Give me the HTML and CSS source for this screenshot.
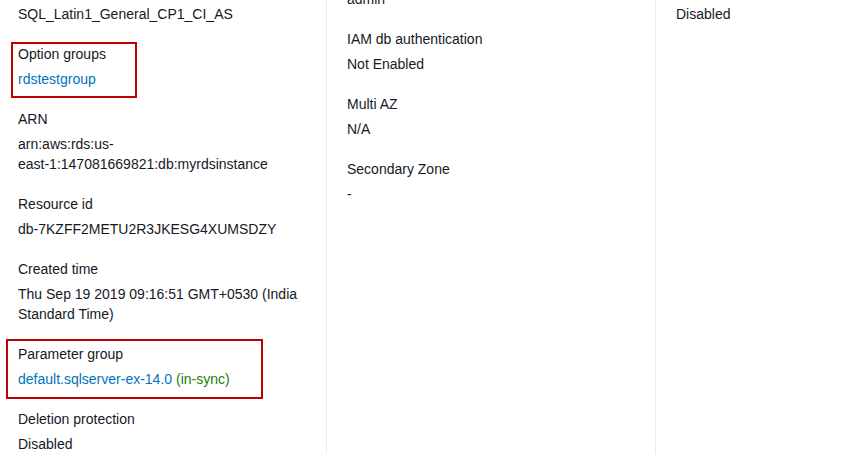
FILE: index.html
```html
<!DOCTYPE html>
<html>
<head>
<meta charset="utf-8">
<link rel="stylesheet" href="styles.css">
</head>
<body>
<div class="page">
  <div class="grid">
    <div class="col col-first">
      <div class="item">
        <div class="value">SQL_Latin1_General_CP1_CI_AS</div>
      </div>
      <div class="item hl hl-option">
        <div class="label">Option groups</div>
        <div class="value"><a class="link">rdstestgroup</a></div>
      </div>
      <div class="item">
        <div class="label">ARN</div>
        <div class="value">arn:aws:rds:us-<span class="nowrap">east-1:147081669821:db:myrdsinstance</span></div>
      </div>
      <div class="item">
        <div class="label">Resource id</div>
        <div class="value">db-7KZFF2METU2R3JKESG4XUMSDZY</div>
      </div>
      <div class="item">
        <div class="label">Created time</div>
        <div class="value">Thu Sep 19 2019 09:16:51 GMT+0530 (India Standard Time)</div>
      </div>
      <div class="item hl hl-param">
        <div class="label">Parameter group</div>
        <div class="value"><a class="link">default.sqlserver-ex-14.0</a> <span class="ok">(in-sync)</span></div>
      </div>
      <div class="item">
        <div class="label">Deletion protection</div>
        <div class="value">Disabled</div>
      </div>
    </div>
    <div class="col col-mid">
      <div class="shift">
        <div class="item">
          <div class="value">admin</div>
        </div>
        <div class="item">
          <div class="label">IAM db authentication</div>
          <div class="value">Not Enabled</div>
        </div>
        <div class="item">
          <div class="label">Multi AZ</div>
          <div class="value">N/A</div>
        </div>
        <div class="item">
          <div class="label">Secondary Zone</div>
          <div class="value">-</div>
        </div>
      </div>
    </div>
    <div class="col col-last">
      <div class="item">
        <div class="value">Disabled</div>
      </div>
    </div>
  </div>
</div>
</body>
</html>
```
FILE: styles.css
```css
html, body {
  margin: 0;
  padding: 0;
  background: #ffffff;
}
body {
  font-family: "Liberation Sans", Arial, sans-serif;
  font-size: 14px;
  line-height: 20px;
  color: #16191f;
}
.page {
  width: 851px;
  height: 470px;
  overflow: hidden;
}
.grid {
  display: grid;
  grid-template-columns: 326px 329px 1fr;
}
.col {
  display: flex;
  flex-direction: column;
  gap: 20px;
  padding-top: 4px;
}
.col-first {
  padding-left: 18px;
  padding-right: 20px;
}
.col-mid,
.col-last {
  border-left: 1px solid #eaeded;
  padding-left: 20px;
  padding-right: 20px;
}
.col-mid {
  padding-top: 0;
}
.shift {
  display: flex;
  flex-direction: column;
  gap: 20px;
  margin-top: -11px;
}
.item {
  display: flex;
  flex-direction: column;
  gap: 5px;
  position: relative;
}
.nowrap {
  white-space: nowrap;
}
.link {
  color: #0073bb;
  text-decoration: none;
}
.ok {
  color: #1d8102;
}
.hl::after {
  content: "";
  position: absolute;
  border: 2px solid #c00000;
  box-sizing: border-box;
  pointer-events: none;
}
.hl-option::after {
  left: -7px;
  top: -2px;
  width: 126px;
  height: 56px;
}
.hl-param::after {
  left: -12px;
  top: -5px;
  width: 257px;
  height: 60px;
}
```
